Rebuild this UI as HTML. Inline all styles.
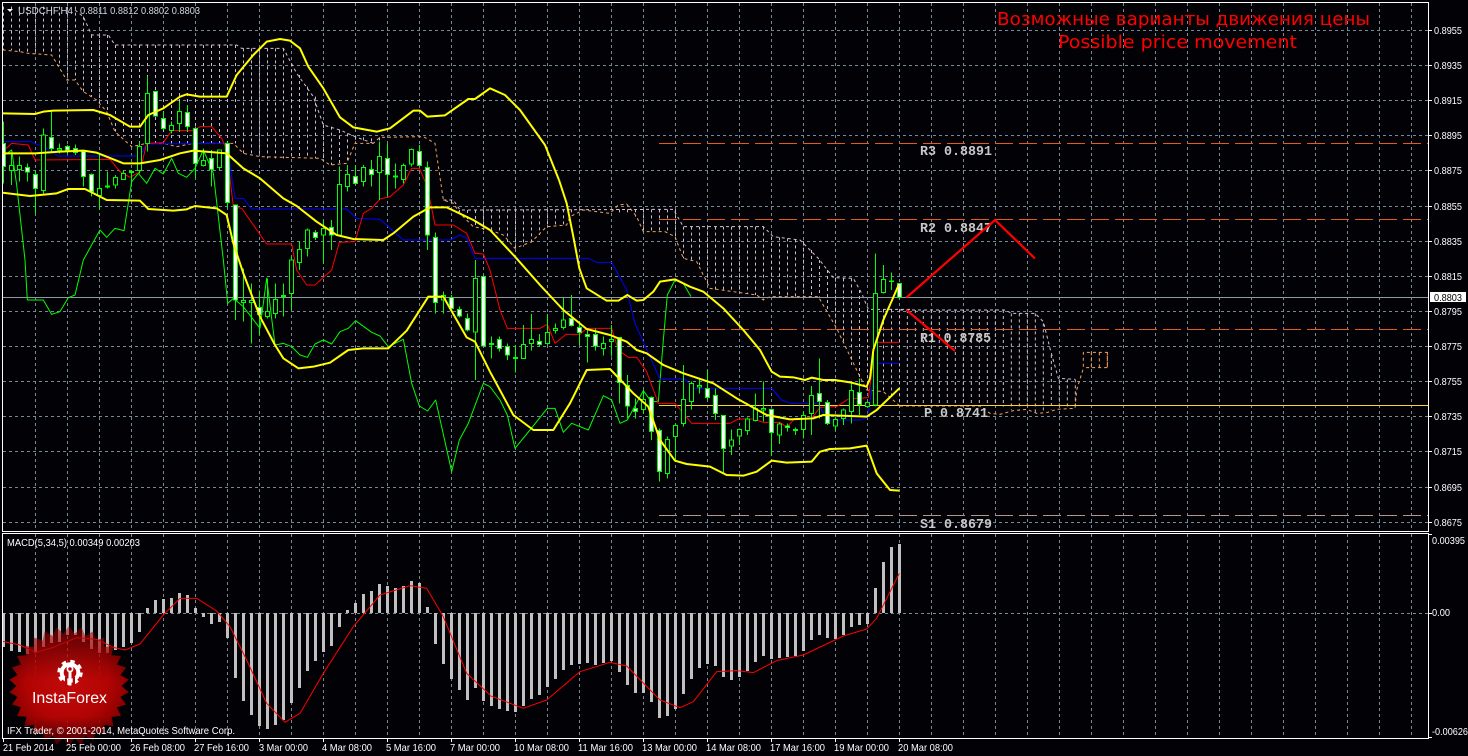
<!DOCTYPE html>
<html><head><meta charset="utf-8"><title>USDCHF H4</title>
<style>
html,body{margin:0;padding:0;background:#020206;overflow:hidden}
svg{display:block}
text{font-family:"Liberation Sans",sans-serif;font-size:10.5px;fill:#fff}
.m{font-family:"Liberation Mono",monospace;font-size:14px;font-weight:bold;fill:#c8c8c8}
.r{font-family:"DejaVu Sans","Liberation Sans",sans-serif;font-size:18px;fill:#f00}
.n{fill:none}
</style></head><body>
<svg xmlns="http://www.w3.org/2000/svg" width="1468" height="756" viewBox="0 0 1468 756">
<defs>
<radialGradient id="rg" gradientUnits="userSpaceOnUse" cx="68" cy="680" r="62"><stop offset="0" stop-color="#c40a0a"/><stop offset=".65" stop-color="#b20404"/><stop offset="1" stop-color="#8a0000"/></radialGradient>
<linearGradient id="fg" gradientUnits="userSpaceOnUse" x1="0" y1="627" x2="0" y2="746"><stop offset="0" stop-color="#fff" stop-opacity=".5"/><stop offset=".3" stop-color="#fff" stop-opacity=".85"/><stop offset=".45" stop-color="#fff"/><stop offset=".75" stop-color="#fff"/><stop offset="1" stop-color="#fff" stop-opacity=".5"/></linearGradient>
<mask id="fade" maskUnits="userSpaceOnUse" x="0" y="620" width="140" height="136"><rect x="0" y="620" width="140" height="136" fill="url(#fg)"/></mask>
<mask id="star" maskUnits="userSpaceOnUse" x="0" y="620" width="140" height="136"><g transform="translate(69,686)" fill="#fff"><circle r="52.5"/><path id="tt" d="M-5.7 -52 L0 -60 L5.7 -52Z"/><use href="#tt" transform="rotate(12)"/><use href="#tt" transform="rotate(24)"/><use href="#tt" transform="rotate(36)"/><use href="#tt" transform="rotate(48)"/><use href="#tt" transform="rotate(60)"/><use href="#tt" transform="rotate(72)"/><use href="#tt" transform="rotate(84)"/><use href="#tt" transform="rotate(96)"/><use href="#tt" transform="rotate(108)"/><use href="#tt" transform="rotate(120)"/><use href="#tt" transform="rotate(132)"/><use href="#tt" transform="rotate(144)"/><use href="#tt" transform="rotate(156)"/><use href="#tt" transform="rotate(168)"/><use href="#tt" transform="rotate(180)"/><use href="#tt" transform="rotate(192)"/><use href="#tt" transform="rotate(204)"/><use href="#tt" transform="rotate(216)"/><use href="#tt" transform="rotate(228)"/><use href="#tt" transform="rotate(240)"/><use href="#tt" transform="rotate(252)"/><use href="#tt" transform="rotate(264)"/><use href="#tt" transform="rotate(276)"/><use href="#tt" transform="rotate(288)"/><use href="#tt" transform="rotate(300)"/><use href="#tt" transform="rotate(312)"/><use href="#tt" transform="rotate(324)"/><use href="#tt" transform="rotate(336)"/><use href="#tt" transform="rotate(348)"/></g></mask>
<clipPath id="cp"><rect x="3" y="3" width="1425" height="528"/></clipPath>
</defs>
<rect width="1468" height="756" fill="#020206"/>

<!-- main grid -->
<g stroke="#778899" fill="none" shape-rendering="crispEdges" stroke-dasharray="3 3">
<path d="M3 30.5H1428M3 65.5H1428M3 100.5H1428M3 135.5H1428M3 170.5H1428M3 206.5H1428M3 241.5H1428M3 276.5H1428M3 311.5H1428M3 346.5H1428M3 381.5H1428M3 416.5H1428M3 451.5H1428M3 487.5H1428M3 522.5H1428"/>
<path d="M35.5 3V531M67.5 3V531M99.5 3V531M131.5 3V531M163.5 3V531M195.5 3V531M227.5 3V531M259.5 3V531M291.5 3V531M323.5 3V531M355.5 3V531M387.5 3V531M419.5 3V531M451.5 3V531M483.5 3V531M515.5 3V531M547.5 3V531M579.5 3V531M611.5 3V531M643.5 3V531M675.5 3V531M707.5 3V531M739.5 3V531M771.5 3V531M803.5 3V531M835.5 3V531M867.5 3V531M899.5 3V531M931.5 3V531M963.5 3V531M995.5 3V531M1027.5 3V531M1059.5 3V531M1091.5 3V531M1123.5 3V531M1155.5 3V531M1187.5 3V531M1219.5 3V531M1251.5 3V531M1283.5 3V531M1315.5 3V531M1347.5 3V531M1379.5 3V531M1411.5 3V531"/>
<path d="M35.5 534V738M67.5 534V738M99.5 534V738M131.5 534V738M163.5 534V738M195.5 534V738M227.5 534V738M259.5 534V738M291.5 534V738M323.5 534V738M355.5 534V738M387.5 534V738M419.5 534V738M451.5 534V738M483.5 534V738M515.5 534V738M547.5 534V738M579.5 534V738M611.5 534V738M643.5 534V738M675.5 534V738M707.5 534V738M739.5 534V738M771.5 534V738M803.5 534V738M835.5 534V738M867.5 534V738M899.5 534V738M931.5 534V738M963.5 534V738M995.5 534V738M1027.5 534V738M1059.5 534V738M1091.5 534V738M1123.5 534V738M1155.5 534V738M1187.5 534V738M1219.5 534V738M1251.5 534V738M1283.5 534V738M1315.5 534V738M1347.5 534V738M1379.5 534V738M1411.5 534V738"/>
<path d="M3 613.5H1428"/>
</g>

<g clip-path="url(#cp)">
<!-- cloud A -->
<g transform="scale(.33333)" fill="none" stroke-width="3" stroke-dasharray="9 9">
<path stroke="#cdbccd" d="M10.5 20V150M34.5 20V150M58.5 20V155M82.5 20V160M106.5 20V160M130.5 20V162M154.5 20V165M178.5 20V190M202.5 20V240M226.5 20V240M250.5 50V275M274.5 105V290M298.5 105V310M322.5 105V335M346.5 135V395M370.5 135V410M394.5 135V435M418.5 135V432M442.5 135V430M466.5 135V430M490.5 135V430M514.5 135V435M538.5 135V440M562.5 135V432M586.5 135V430M610.5 135V430M634.5 135V430M658.5 135V430M682.5 135V430M706.5 135V430M730.5 145V460M754.5 145V465M778.5 145V470M802.5 145V475M826.5 145V475M850.5 145V475M874.5 190V475M898.5 225V475M922.5 260V475M946.5 290V475M970.5 375V475M994.5 380V495M1018.5 390V490M1042.5 400V490M1066.5 410V430M1090.5 412V430M1114.5 415V430M1138.5 412V425M1354.5 600V610M1378.5 630V640M1402.5 630V660M1426.5 630V680M1450.5 630V690"/>
<polyline stroke="#f4a460" points="8,150 60,155 85,160 155,165 200,240 225,240 250,275 290,300 320,335 345,395 395,440 440,430 490,430 530,440 580,430 700,430 730,460 780,470 960,475 990,495 1040,490 1065,430 1120,430 1140,412 1270,410 1305,430 1330,600 1360,610 1380,640 1420,680 1470,690"/>
<polyline stroke="#d8bfd8" points="225,30 250,50 275,105 325,105 345,135 710,135 725,145 850,145 890,220 940,290 970,375 1020,390 1065,410 1120,430"/>
<polyline stroke="#d8bfd8" points="1330,600 1360,600 1380,630 1470,630"/>
</g>
<!-- cloud B -->
<g transform="translate(490,180) scale(.33333)" fill="none" stroke-width="3" stroke-dasharray="9 9">
<path stroke="#cdbccd" d="M4.5 88V150M28.5 88V160M52.5 88V185M76.5 88V205M100.5 88V200M124.5 88V190M148.5 88V165M172.5 88V140M196.5 88V135M220.5 88V135M244.5 88V105M268.5 88V92M388.5 88V100M412.5 88V100M436.5 88V110M460.5 88V155M484.5 88V155M508.5 88V155M532.5 88V155M556.5 88V170M580.5 140V235M604.5 140V240M628.5 140V255M652.5 140V310M676.5 140V330M700.5 140V335M724.5 140V337M748.5 140V340M772.5 140V342M796.5 140V345M820.5 140V358M844.5 170V350M868.5 172V350M892.5 175V350M916.5 178V350M940.5 185V350M964.5 210V350M988.5 240V350M1012.5 270V390M1036.5 293V440M1060.5 295V490M1084.5 295V555M1108.5 330V610M1132.5 388V630M1156.5 388V633M1180.5 388V635M1204.5 388V655M1228.5 388V678"/>
<polyline stroke="#f4a460" points="0,150 40,165 75,205 125,185 170,140 230,135 240,110 280,90 360,100 385,75 410,72 440,110 460,155 525,155 555,170 580,235 620,245 660,325 800,345 820,360 840,350 985,350 1040,445 1100,570 1130,630 1180,635 1230,678"/>
<polyline stroke="#d8bfd8" points="0,90 550,88 580,140 820,140 850,170 930,180 985,235 1030,293 1090,295 1115,340 1135,388 1260,388"/>
</g>
<!-- cloud C -->
<g transform="translate(900,290) scale(.33333)" fill="none" stroke-width="3" stroke-dasharray="9 9">
<path stroke="#cdbccd" d="M22 60V348M46 60V348M70 60V348M94 60V348M118 60V348M142 60V348M166 60V348M190 60V348M214 60V348M238 60V348M262 60V348M286 60V348M310 60V350M334 70V360M358 70V362M382 70V358M406 70V370M430 100V370M454 195V358M478 268V358M502 268V356M526 268V350"/>
<path stroke="#f4a460" d="M574 187V233M598 187V233M622 187V233"/>
<polyline stroke="#f4a460" points="0,348 240,348 270,370 300,373 340,362 380,358 410,370 440,368 470,358 525,355 530,300 550,235 550,187 622,187 622,233 550,233"/>
<polyline stroke="#d8bfd8" points="0,60 315,60 335,70 405,70 430,95 450,175 475,265 525,268"/>
</g>

<!-- pivot levels -->
<g fill="none" shape-rendering="crispEdges" stroke-dasharray="18 6">
<path stroke="#e65a1f" d="M659 143.5H1428M659 219.5H1428M659 329.5H1428"/>
<path stroke="#b49488" d="M659 515.5H1428"/>
</g>
<path d="M659 405.5H1428" stroke="#fdd32a" shape-rendering="crispEdges"/>
<path d="M3 297.5H1428" stroke="#8c98a4" shape-rendering="crispEdges"/>
<text class="m" x="920" y="155" textLength="72" lengthAdjust="spacingAndGlyphs">R3 0.8891</text>
<text class="m" x="920" y="232" textLength="72" lengthAdjust="spacingAndGlyphs">R2 0.8847</text>
<text class="m" x="920" y="342" textLength="71" lengthAdjust="spacingAndGlyphs">R1 0.8785</text>
<text class="m" x="924" y="417" textLength="64" lengthAdjust="spacingAndGlyphs">P 0.8741</text>
<text class="m" x="920" y="528" textLength="72" lengthAdjust="spacingAndGlyphs">S1 0.8679</text>

<!-- Ichimoku A -->
<g transform="scale(.33333)" fill="none" stroke-width="3" stroke-linejoin="round">
<polyline stroke="#00ff00" points="8,470 35,450 50,555 75,780 82,900 130,900 155,943 180,935 205,893 225,885 250,780 300,690 320,712 345,685 372,692 395,545 415,520 440,550 465,505 490,522 515,475 535,520 560,532 585,505 610,450 640,520 670,780 683,910 700,895 730,920 780,985 800,835 825,1035 850,1030 875,1040 900,1065 922,1072 945,1032 970,1020 995,1032 1020,995 1045,985 1067,962 1115,997 1140,1008 1165,1040 1210,1018 1235,1150 1258,1218 1283,1233 1307,1200 1355,1415 1378,1320 1405,1270 1450,1150 1470,1160"/>
<polyline stroke="#0000ff" points="8,425 90,425 130,440 175,468 420,468 440,432 650,430 680,430 705,595 730,595 755,627 1040,627 1070,655 1140,658 1210,720 1350,720 1380,705 1400,715 1425,775 1470,775"/>
<polyline stroke="#ff0000" points="8,455 35,430 85,435 105,480 330,478 360,515 390,532 420,515 440,430 490,428 515,392 580,392 600,380 635,380 665,415 680,450 700,620 725,625 800,732 875,732 890,810 920,855 945,855 995,810 1018,727 1065,725 1090,640 1115,625 1140,597 1170,590 1210,555 1235,505 1258,505 1282,560 1305,675 1360,675 1400,700 1425,760 1450,762 1470,810"/>
</g>
<!-- Ichimoku B -->
<g transform="translate(490,180) scale(.33333)" fill="none" stroke-width="3" stroke-linejoin="round">
<polyline stroke="#00ff00" points="0,620 30,660 52,705 75,805 120,750 172,685 195,685 220,757 245,730 295,750 340,647 365,660 390,730 412,720 460,632 484,665 505,665 520,480 532,345 555,300 580,310 603,350"/>
<polyline stroke="#0000ff" points="0,235 295,235 320,247 365,247 410,330 435,430 510,597 585,597 610,625 845,625 875,660 900,670 985,670 1010,720 1110,720 1132,712 1158,550 1228,550"/>
<polyline stroke="#ff0000" points="0,270 30,390 52,445 150,445 172,433 195,490 228,463 270,463 290,445 365,445 385,510 415,532 440,532 470,575 505,670 555,670 605,730 720,730 745,717 790,717 820,727 870,727 890,742 915,715 965,715 990,682 1040,680 1075,657 1135,653 1158,487 1228,487"/>
</g>

<!-- Candles A -->
<g transform="scale(.33333)" stroke="#00ff00" stroke-width="3" shape-rendering="crispEdges">
<path class="n" d="M10.5 365V550M34.5 460V555M58.5 470V545M82.5 490V545M106.5 510V640M130.5 385V580M154.5 330V455M178.5 430V460M202.5 435V460M226.5 433V465M250.5 450V560M274.5 520V590M298.5 460V630M322.5 515V565M346.5 525V565M370.5 510V540M394.5 510V560M418.5 425V520M442.5 230V455M466.5 275V350M490.5 335V390M514.5 365V400M538.5 305V395M562.5 315V395M586.5 380V535M610.5 445V500M634.5 450V560M658.5 450V510M682.5 425V625M706.5 615V960M730.5 805V965M754.5 850V1030M778.5 872V1005M802.5 835V955M826.5 850V955M850.5 850V950M874.5 770V930M898.5 725V810M922.5 685V770M946.5 690V720M970.5 660V790M994.5 660V750M1018.5 500V705M1042.5 495V575M1066.5 495V555M1090.5 495V560M1114.5 480V560M1138.5 425V600M1162.5 430V590M1186.5 490V565M1210.5 490V550M1234.5 445V500M1258.5 435V500M1282.5 485V750M1306.5 697V940M1330.5 875V940M1354.5 885V930M1378.5 920V952M1402.5 940V995M1426.5 780V1140M1450.5 825V1040"/>
<path fill="#020206" d="M28.5 497h12V512h-12zM52.5 497h12V508h-12zM124.5 405h12V572h-12zM172.5 445h12V450h-12zM292.5 565h12V587h-12zM316.5 558h12V561h-12zM340.5 532h12V555h-12zM364.5 520h12V538h-12zM388.5 515h12V518h-12zM412.5 440h12V512h-12zM436.5 280h12V430h-12zM508.5 377h12V392h-12zM532.5 335h12V370h-12zM604.5 482h12V496h-12zM652.5 450h12V503h-12zM724.5 902h12V907h-12zM748.5 902h12V907h-12zM796.5 935h12V950h-12zM820.5 898h12V940h-12zM844.5 886h12V890h-12zM868.5 780h12V880h-12zM892.5 748h12V788h-12zM916.5 690h12V745h-12zM964.5 685h12V705h-12zM1012.5 553h12V705h-12zM1036.5 523h12V560h-12zM1084.5 502h12V545h-12zM1132.5 470h12V517h-12zM1180.5 528h12V531h-12zM1204.5 496h12V538h-12zM1228.5 448h12V492h-12zM1324.5 886h12V900h-12zM1420.5 835h12V996h-12z"/>
<path fill="#fff" d="M4.5 430h12V500h-12zM76.5 503h12V516h-12zM100.5 523h12V565h-12zM148.5 412h12V445h-12zM196.5 440h12V450h-12zM220.5 445h12V458h-12zM244.5 455h12V530h-12zM268.5 523h12V575h-12zM460.5 275h12V348h-12zM484.5 355h12V385h-12zM556.5 338h12V380h-12zM580.5 385h12V490h-12zM628.5 476h12V508h-12zM676.5 430h12V607h-12zM700.5 615h12V900h-12zM772.5 923h12V943h-12zM940.5 697h12V712h-12zM988.5 683h12V705h-12zM1060.5 530h12V550h-12zM1108.5 508h12V523h-12zM1156.5 476h12V523h-12zM1252.5 455h12V497h-12zM1276.5 503h12V705h-12zM1300.5 712h12V907h-12zM1348.5 893h12V925h-12zM1372.5 928h12V948h-12zM1396.5 956h12V990h-12zM1444.5 830h12V1038h-12z"/>
</g>
<!-- Candles B -->
<g transform="translate(490,180) scale(.33333)" stroke="#00ff00" stroke-width="3" shape-rendering="crispEdges">
<path class="n" d="M4.5 470V535M28.5 470V515M52.5 490V540M76.5 495V578M100.5 435V537M124.5 402V512M148.5 462V500M172.5 402V495M196.5 430V460M220.5 352V448M244.5 345V440M268.5 425V495M292.5 450V547M316.5 445V512M340.5 470V527M364.5 435V530M388.5 473V670M412.5 585V715M436.5 655V715M460.5 630V700M484.5 650V780M508.5 745V905M532.5 770V895M556.5 732V840M580.5 555V740M604.5 605V688M628.5 595V640M652.5 570V660M676.5 625V720M700.5 705V880M724.5 748V825M748.5 745V795M772.5 712V765M796.5 640V725M820.5 605V725M844.5 685V828M868.5 728V792M892.5 730V755M916.5 742V765M940.5 695V775M964.5 618V765M988.5 535V715M1012.5 660V735M1036.5 712V752M1060.5 685V735M1084.5 610V730M1108.5 595V705M1132.5 665V682M1156.5 220V680M1180.5 255V340M1204.5 278V330M1228.5 310V358"/>
<path fill="#020206" d="M-1.5 490h12V493h-12zM70.5 532h12V535h-12zM94.5 493h12V535h-12zM118.5 478h12V490h-12zM166.5 457h12V490h-12zM190.5 446h12V452h-12zM214.5 420h12V442h-12zM334.5 491h12V506h-12zM358.5 478h12V484h-12zM454.5 658h12V688h-12zM526.5 778h12V880h-12zM550.5 737h12V770h-12zM574.5 658h12V730h-12zM598.5 610h12V665h-12zM622.5 617h12V621h-12zM718.5 780h12V798h-12zM742.5 748h12V768h-12zM766.5 717h12V752h-12zM790.5 685h12V722h-12zM814.5 685h12V690h-12zM862.5 732h12V765h-12zM910.5 748h12V751h-12zM934.5 707h12V748h-12zM958.5 646h12V700h-12zM1030.5 718h12V738h-12zM1054.5 690h12V715h-12zM1078.5 632h12V695h-12zM1126.5 667h12V680h-12zM1150.5 340h12V675h-12zM1174.5 298h12V338h-12zM1198.5 303h12V305h-12z"/>
<path fill="#fff" d="M22.5 478h12V505h-12zM46.5 500h12V525h-12zM142.5 485h12V493h-12zM238.5 415h12V436h-12zM262.5 443h12V457h-12zM286.5 464h12V469h-12zM310.5 463h12V498h-12zM382.5 473h12V608h-12zM406.5 617h12V678h-12zM430.5 685h12V694h-12zM478.5 653h12V755h-12zM502.5 752h12V875h-12zM646.5 625h12V652h-12zM670.5 647h12V700h-12zM694.5 707h12V805h-12zM838.5 688h12V757h-12zM886.5 738h12V742h-12zM982.5 640h12V665h-12zM1006.5 667h12V730h-12zM1102.5 637h12V674h-12zM1222.5 310h12V352h-12z"/>
</g>

<!-- Bollinger A -->
<g transform="scale(.33333)" fill="none" stroke="#ffff00" stroke-width="6" stroke-linejoin="round">
<polyline points="8,340 105,342 130,335 160,332 280,330 330,345 390,380 420,380 445,345 490,325 540,290 560,283 600,290 680,290 710,225 760,165 800,125 840,117 870,122 900,145 925,200 970,265 1020,352 1060,382 1130,395 1170,385 1240,332 1260,332 1282,350 1335,346 1405,297 1425,297 1470,265 1515,285 1560,330 1635,435 1677,540"/>
<polyline points="8,460 105,460 180,455 250,452 290,458 370,490 420,490 480,480 540,460 580,452 680,460 730,505 780,535 850,595 890,618 950,665 1010,705 1060,717 1150,720 1180,700 1240,650 1290,622 1340,622 1420,660 1470,690"/>
<polyline points="8,578 90,588 170,580 205,567 255,567 320,600 420,602 445,627 520,632 560,628 585,618 650,625 680,645 700,730 730,820 780,950 825,1035 850,1075 895,1105 940,1100 990,1088 1045,1050 1090,1045 1165,1045 1220,992 1285,890 1330,890 1400,1012 1425,1025 1470,1115"/>
</g>
<!-- Bollinger B -->
<g transform="translate(490,180) scale(.33333)" fill="none" stroke="#ffff00" stroke-width="6" stroke-linejoin="round">
<polyline points="207,0 230,70 250,170 268,265 290,325 350,362 385,362 412,345 440,362 460,360 490,335 510,305 555,298 600,320 640,335 700,385 760,450 810,510 845,575 870,590 910,592 945,600 965,593 1000,600 1035,600 1085,608 1130,620 1140,595 1150,510 1180,420 1226,315"/>
<polyline points="0,150 75,230 150,315 220,390 290,447 360,465 410,485 440,510 470,520 520,555 580,580 670,610 740,655 830,705 900,718 970,715 1000,705 1130,710 1160,690 1228,625"/>
<polyline points="0,575 70,705 130,750 190,750 240,670 290,570 360,567 430,640 475,680 510,780 555,842 590,852 660,860 710,885 760,887 800,875 845,842 890,848 965,845 990,815 1020,807 1080,805 1130,797 1160,880 1200,930 1228,932"/>
</g>

<!-- forecast arrows -->
<path d="M906.5 297.5L995 220L1035 258.5M906.5 310L955 351" fill="none" stroke="#f00" stroke-width="2.2"/>
</g>

<!-- MACD histogram -->
<path fill="none" stroke="#c0c0c0" stroke-width="3" shape-rendering="crispEdges" d="M3.5 613V647M11.5 613V651M19.5 613V652M27.5 613V654M35.5 613V653M43.5 613V647M51.5 613V643M59.5 613V642M67.5 613V635M75.5 613V635M83.5 613V642M91.5 613V649M99.5 613V653M107.5 613V653M115.5 613V650M123.5 613V647M131.5 613V643M139.5 613V632M147.5 613V608M155.5 613V600M163.5 613V599M171.5 613V598M179.5 613V593M187.5 613V595M195.5 613V608M203.5 613V617M211.5 613V624M219.5 613V622M227.5 613V638M235.5 613V678M243.5 613V701M251.5 613V715M259.5 613V726M267.5 613V729M275.5 613V725M283.5 613V720M291.5 613V703M299.5 613V688M307.5 613V671M315.5 613V661M323.5 613V652M331.5 613V646M339.5 613V627M347.5 613V610M355.5 613V603M363.5 613V594M371.5 613V591M379.5 613V584M387.5 613V586M395.5 613V588M403.5 613V586M411.5 613V581M419.5 613V583M427.5 613V607M435.5 613V644M443.5 613V664M451.5 613V679M459.5 613V690M467.5 613V700M475.5 613V688M483.5 613V701M491.5 613V706M499.5 613V709M507.5 613V711M515.5 613V712M523.5 613V706M531.5 613V699M539.5 613V695M547.5 613V687M555.5 613V679M563.5 613V670M571.5 613V665M579.5 613V664M587.5 613V663M595.5 613V665M603.5 613V663M611.5 613V661M619.5 613V672M627.5 613V685M635.5 613V693M643.5 613V693M651.5 613V702M659.5 613V718M667.5 613V716M675.5 613V709M683.5 613V694M691.5 613V679M699.5 613V668M707.5 613V664M715.5 613V666M723.5 613V677M731.5 613V680M739.5 613V677M747.5 613V671M755.5 613V662M763.5 613V656M771.5 613V659M779.5 613V658M787.5 613V657M795.5 613V656M803.5 613V651M811.5 613V640M819.5 613V635M827.5 613V638M835.5 613V639M843.5 613V635M851.5 613V627M859.5 613V625M867.5 613V624M875.5 613V588M883.5 613V562M891.5 613V547M899.5 613V544"/>
<g fill="none" stroke="#ff0000" stroke-width="3" stroke-linejoin="round">
<polyline transform="translate(0,530) scale(.33333)" points="8,334 60,345 108,367 160,352 230,323 290,328 340,352 375,360 420,342 490,255 540,205 590,205 650,243 690,290 740,390 800,520 855,577 900,550 970,430 1060,290 1140,195 1230,167 1280,175 1330,260 1400,430 1470,495"/>
<polyline transform="translate(490,530) scale(.33333)" points="0,497 100,535 170,510 270,425 360,397 410,408 510,510 570,533 610,515 680,425 740,422 790,428 860,392 940,375 1060,318 1130,297 1160,265 1228,130"/>
</g>

<!-- InstaForex logo -->
<g mask="url(#fade)"><g mask="url(#star)"><rect x="0" y="620" width="140" height="136" fill="url(#rg)"/></g></g>
<g>
<circle cx="70" cy="672.5" r="11" fill="none" stroke="#fff" stroke-width="3.4" stroke-dasharray="4.3 4.34"/>
<circle cx="70" cy="672.5" r="8.3" fill="#b80606" stroke="#fff" stroke-width="4"/>
<circle cx="70" cy="669" r="2.6" fill="#b80606" stroke="#fff" stroke-width="1.7"/>
<path d="M68.5 671H71.5V685.5H68.5Z" fill="#fff"/>
<path d="M65 677H67.3V686H65ZM72.7 677H75V686H72.7Z" fill="#b80606"/>
<text x="32" y="703" textLength="75" lengthAdjust="spacingAndGlyphs" style="font-size:16px;fill:#fff">InstaForex</text>
</g>

<!-- frames -->
<g fill="none" stroke="#fff" shape-rendering="crispEdges">
<rect x="2.5" y="2.5" width="1426" height="529"/>
<rect x="2.5" y="533.5" width="1426" height="205"/>
<path d="M1429 30.5h3M1429 65.5h3M1429 100.5h3M1429 135.5h3M1429 170.5h3M1429 206.5h3M1429 241.5h3M1429 276.5h3M1429 311.5h3M1429 346.5h3M1429 381.5h3M1429 416.5h3M1429 451.5h3M1429 487.5h3M1429 522.5h3M1429 534.5h3M1429 613.5h3M1429 737.5h3"/>
<path d="M3.5 739v3M67.5 739v3M131.5 739v3M195.5 739v3M259.5 739v3M323.5 739v3M387.5 739v3M451.5 739v3M515.5 739v3M579.5 739v3M643.5 739v3M707.5 739v3M771.5 739v3M835.5 739v3M899.5 739v3"/>
</g>

<!-- chart texts -->
<path d="M7 9h6l-3 3z" fill="#fff"/>
<text x="18" y="14" textLength="55" lengthAdjust="spacingAndGlyphs" style="fill:#cfd8e2">USDCHF,H4</text>
<text x="80" y="14" textLength="120" lengthAdjust="spacingAndGlyphs" style="fill:#cfd8e2">0.8811 0.8812 0.8802 0.8803</text>
<text class="r" x="997" y="25" textLength="373" lengthAdjust="spacingAndGlyphs">Возможные варианты движения цены</text>
<text class="r" x="1058" y="48" textLength="239" lengthAdjust="spacingAndGlyphs">Possible price movement</text>
<text x="7" y="546" textLength="133" lengthAdjust="spacingAndGlyphs">MACD(5,34,5) 0.00349 0.00203</text>
<text x="7" y="734" textLength="228" lengthAdjust="spacingAndGlyphs">IFX Trader, © 2001-2014, MetaQuotes Software Corp.</text>

<!-- price axis -->
<text x="1434" y="34" textLength="28" lengthAdjust="spacingAndGlyphs">0.8955</text>
<text x="1434" y="69" textLength="28" lengthAdjust="spacingAndGlyphs">0.8935</text>
<text x="1434" y="104" textLength="28" lengthAdjust="spacingAndGlyphs">0.8915</text>
<text x="1434" y="139" textLength="28" lengthAdjust="spacingAndGlyphs">0.8895</text>
<text x="1434" y="174" textLength="28" lengthAdjust="spacingAndGlyphs">0.8875</text>
<text x="1434" y="210" textLength="28" lengthAdjust="spacingAndGlyphs">0.8855</text>
<text x="1434" y="245" textLength="28" lengthAdjust="spacingAndGlyphs">0.8835</text>
<text x="1434" y="280" textLength="28" lengthAdjust="spacingAndGlyphs">0.8815</text>
<text x="1434" y="315" textLength="28" lengthAdjust="spacingAndGlyphs">0.8795</text>
<text x="1434" y="350" textLength="28" lengthAdjust="spacingAndGlyphs">0.8775</text>
<text x="1434" y="385" textLength="28" lengthAdjust="spacingAndGlyphs">0.8755</text>
<text x="1434" y="420" textLength="28" lengthAdjust="spacingAndGlyphs">0.8735</text>
<text x="1434" y="455" textLength="28" lengthAdjust="spacingAndGlyphs">0.8715</text>
<text x="1434" y="491" textLength="28" lengthAdjust="spacingAndGlyphs">0.8695</text>
<text x="1434" y="526" textLength="28" lengthAdjust="spacingAndGlyphs">0.8675</text>
<rect x="1430" y="292" width="36" height="10" fill="#fff"/>
<text x="1434" y="301" textLength="28" lengthAdjust="spacingAndGlyphs" style="fill:#000">0.8803</text>
<text x="1432" y="544" textLength="33" lengthAdjust="spacingAndGlyphs">0.00395</text>
<text x="1432" y="616" textLength="18" lengthAdjust="spacingAndGlyphs">0.00</text>
<text x="1432" y="735" textLength="36" lengthAdjust="spacingAndGlyphs">-0.00626</text>

<!-- time axis -->
<text x="3" y="751" textLength="51" lengthAdjust="spacingAndGlyphs">21 Feb 2014</text>
<text x="66" y="751" textLength="55" lengthAdjust="spacingAndGlyphs">25 Feb 00:00</text>
<text x="130" y="751" textLength="55" lengthAdjust="spacingAndGlyphs">26 Feb 08:00</text>
<text x="194" y="751" textLength="55" lengthAdjust="spacingAndGlyphs">27 Feb 16:00</text>
<text x="259" y="751" textLength="49" lengthAdjust="spacingAndGlyphs">3 Mar 00:00</text>
<text x="322" y="751" textLength="50" lengthAdjust="spacingAndGlyphs">4 Mar 08:00</text>
<text x="386" y="751" textLength="50" lengthAdjust="spacingAndGlyphs">5 Mar 16:00</text>
<text x="450" y="751" textLength="50" lengthAdjust="spacingAndGlyphs">7 Mar 00:00</text>
<text x="514" y="751" textLength="55" lengthAdjust="spacingAndGlyphs">10 Mar 08:00</text>
<text x="578" y="751" textLength="55" lengthAdjust="spacingAndGlyphs">11 Mar 16:00</text>
<text x="642" y="751" textLength="55" lengthAdjust="spacingAndGlyphs">13 Mar 00:00</text>
<text x="706" y="751" textLength="55" lengthAdjust="spacingAndGlyphs">14 Mar 08:00</text>
<text x="770" y="751" textLength="55" lengthAdjust="spacingAndGlyphs">17 Mar 16:00</text>
<text x="834" y="751" textLength="55" lengthAdjust="spacingAndGlyphs">19 Mar 00:00</text>
<text x="898" y="751" textLength="55" lengthAdjust="spacingAndGlyphs">20 Mar 08:00</text>
</svg>
</body></html>
